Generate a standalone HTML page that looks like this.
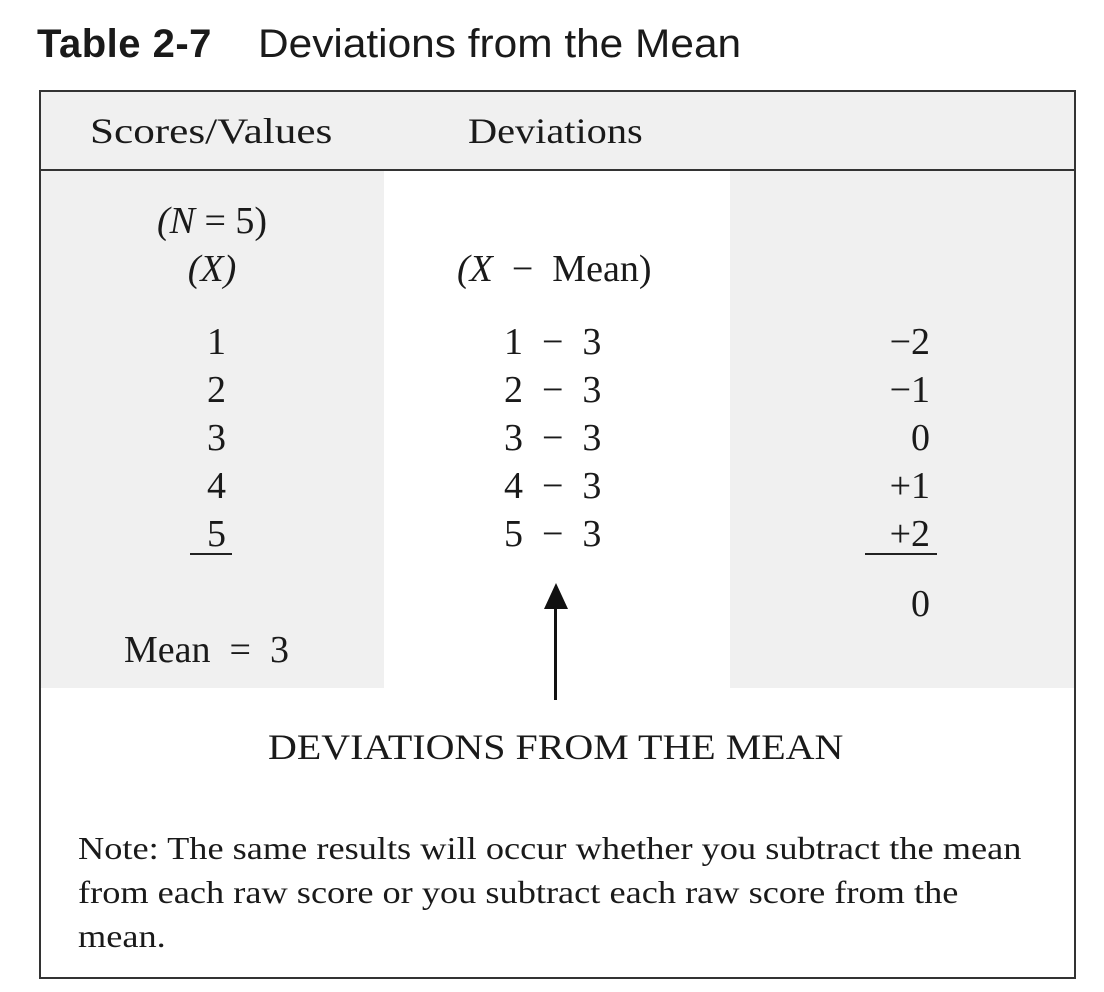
<!DOCTYPE html>
<html><head><style>
body{margin:0;width:1104px;height:992px;background:#fff;position:relative;font-family:"Liberation Serif",serif;color:#1a1a1a;overflow:hidden}
.a{position:absolute;white-space:nowrap}
.c{text-align:center}
.g{position:absolute;background:#f0f0f0}
.n{font-size:38px;line-height:48px}
.s{transform-origin:0 0}
</style></head><body>
<div class="a" style="left:37px;top:22px;font-family:'Liberation Sans',sans-serif;font-size:40px"><b style="letter-spacing:0.5px">Table 2-7</b></div>
<div class="a s" style="left:258px;top:22px;font-family:'Liberation Sans',sans-serif;font-size:40px;transform:scaleX(1.06)">Deviations from the Mean</div>
<div class="g" style="left:39px;top:90px;width:1036px;height:80px"></div>
<div class="g" style="left:40px;top:171px;width:344px;height:517px"></div>
<div class="g" style="left:730px;top:171px;width:344px;height:517px"></div>
<div class="a" style="left:39px;top:90px;width:1033px;height:885px;border:2px solid #333"></div>
<div class="a" style="left:39px;top:169px;width:1036px;height:2px;background:#333"></div>
<div class="a s" style="left:90px;top:110px;font-size:36px;transform:scaleX(1.2)">Scores/Values</div>
<div class="a s" style="left:468px;top:110px;font-size:36px;transform:scaleX(1.12)">Deviations</div>
<div class="a c n" style="left:40px;width:344px;top:197px"><i>(N</i>&nbsp;=&nbsp;5)<br><i>(X)</i></div>
<div class="a n" style="left:457px;top:245px"><i>(X</i>&nbsp;&nbsp;−&nbsp;&nbsp;Mean)</div>
<div class="a n" style="left:196px;top:318px;text-align:right;width:30px">1<br>2<br>3<br>4<br>5</div>
<div class="a" style="left:190px;top:553px;width:42px;height:2px;background:#222"></div>
<div class="a n" style="left:504px;top:318px">1&nbsp;&nbsp;−&nbsp;&nbsp;3<br>2&nbsp;&nbsp;−&nbsp;&nbsp;3<br>3&nbsp;&nbsp;−&nbsp;&nbsp;3<br>4&nbsp;&nbsp;−&nbsp;&nbsp;3<br>5&nbsp;&nbsp;−&nbsp;&nbsp;3</div>
<div class="a n" style="left:850px;top:318px;text-align:right;width:80px">−2<br>−1<br>0<br>+1<br>+2</div>
<div class="a" style="left:865px;top:553px;width:72px;height:2px;background:#222"></div>
<div class="a n" style="left:850px;top:580px;text-align:right;width:80px">0</div>
<div class="a n" style="left:124px;top:626px">Mean&nbsp;&nbsp;=&nbsp;&nbsp;3</div>
<div class="a" style="left:554px;top:600px;width:3px;height:100px;background:#111"></div>
<svg class="a" style="left:543px;top:583px" width="26" height="26"><polygon points="13,0 25,26 1,26" fill="#111"/></svg>
<div class="a s" style="left:268px;top:726px;font-size:36px;transform:scaleX(1.11)">DEVIATIONS FROM THE MEAN</div>
<div class="a s" style="left:78px;top:826px;font-size:32px;line-height:44px;transform:scaleX(1.135)">Note: The same results will occur whether you subtract the mean<br>from each raw score or you subtract each raw score from the<br>mean.</div>
</body></html>
